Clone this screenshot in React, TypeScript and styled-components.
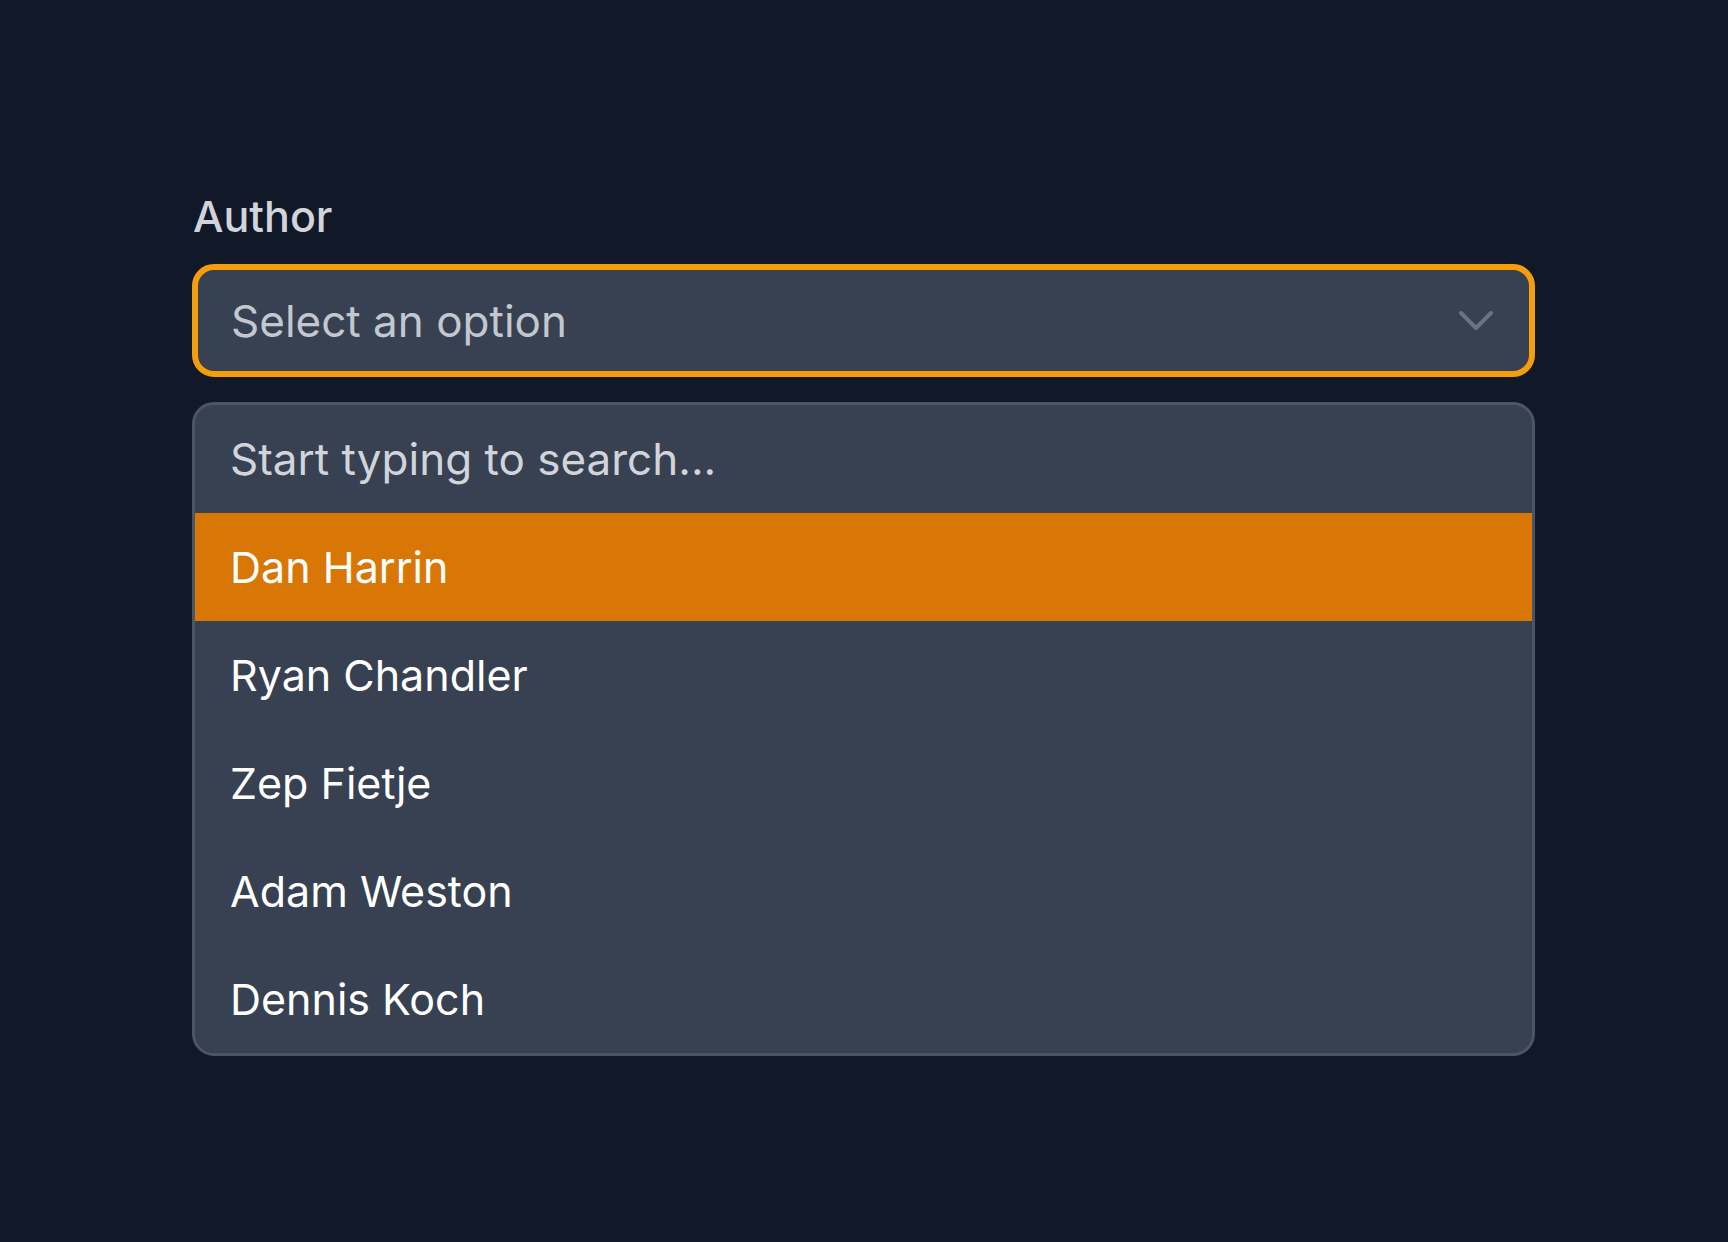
import React from 'react';
import styled, { createGlobalStyle } from 'styled-components';

const GlobalStyle = createGlobalStyle`
  html, body {
    margin: 0;
    padding: 0;
    background: #111827;
  }
  body {
    font-family: Inter, "Noto Sans", sans-serif;
    -webkit-font-smoothing: antialiased;
  }
`;

const Page = styled.div`
  min-height: 1242px;
  padding: 187px 0 0 192px;
  box-sizing: border-box;
`;

const Field = styled.div`
  width: 1343px;
  display: flex;
  flex-direction: column;
`;

const Label = styled.label`
  color: #d1d5db;
  font-size: 43px;
  font-weight: 500;
  line-height: 58px;
  margin-bottom: 19px;
  padding-left: 1px;
`;

const Trigger = styled.button`
  display: flex;
  align-items: center;
  justify-content: space-between;
  height: 113px;
  box-sizing: border-box;
  padding: 0 36px 0 33px;
  background: #374151;
  border: 6px solid #f59e0b;
  border-radius: 22px;
  font-family: inherit;
  font-size: 44px;
  color: #c3c8d0;
  text-align: left;
  cursor: pointer;
`;

const Chevron = () => (
  <svg width="34" height="20" viewBox="0 0 34 20" fill="none">
    <path d="M2 2 L17 17 L32 2" stroke="#6b7280" strokeWidth="4" strokeLinecap="round" strokeLinejoin="round" />
  </svg>
);

const Dropdown = styled.div`
  margin-top: 25px;
  border: 3px solid #4b5563;
  border-radius: 22px;
  background: #374151;
  overflow: hidden;
`;

const Search = styled.input`
  display: block;
  width: 100%;
  height: 108px;
  box-sizing: border-box;
  padding: 0 35px;
  background: transparent;
  border: none;
  outline: none;
  font-family: inherit;
  font-size: 44px;
  color: #e5e7eb;
  &::placeholder {
    color: #d1d5db;
  }
`;

const Option = styled.div<{ $active?: boolean }>`
  height: 108px;
  display: flex;
  align-items: center;
  padding: 0 35px;
  font-size: 43px;
  color: #ffffff;
  background: ${(p) => (p.$active ? '#d97706' : 'transparent')};
  cursor: pointer;
`;

const authors = ['Dan Harrin', 'Ryan Chandler', 'Zep Fietje', 'Adam Weston', 'Dennis Koch'];

export default function App() {
  return (
    <>
      <GlobalStyle />
      <Page>
        <Field>
          <Label>Author</Label>
          <Trigger>
            <span>Select an option</span>
            <Chevron />
          </Trigger>
          <Dropdown>
            <Search placeholder="Start typing to search..." />
            {authors.map((name, i) => (
              <Option key={name} $active={i === 0}>
                {name}
              </Option>
            ))}
          </Dropdown>
        </Field>
      </Page>
    </>
  );
}
